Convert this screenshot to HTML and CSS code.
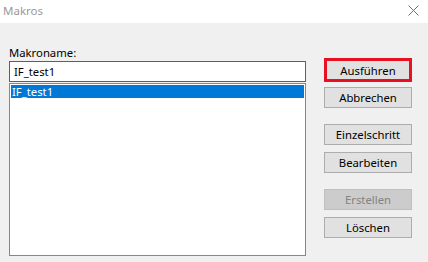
FILE: index.html
```
<!DOCTYPE html>
<html lang="de">
<head>
  <meta charset="UTF-8">
  <meta name="viewport" content="width=device-width, initial-scale=1.0">
  <title>Makros</title>
  <link rel="stylesheet" href="styles.css">
</head>
<body>
  <div class="titlebar">
    <span class="title">Makros</span>
    <svg class="close" width="11" height="11" viewBox="0 0 11 11">
      <path d="M0.5 0.5 L10.5 10.5 M10.5 0.5 L0.5 10.5" stroke="#707070" stroke-width="1" fill="none"/>
    </svg>
  </div>

  <div class="dialog">
    <div class="left">
      <div class="label">Makroname:</div>
      <div class="namefield">IF_test1</div>
      <div class="list">
        <div class="item selected">IF_test1</div>
      </div>
    </div>

    <div class="buttons">
      <button class="btn marked">Ausführen</button>
      <button class="btn">Abbrechen</button>
      <button class="btn group">Einzelschritt</button>
      <button class="btn">Bearbeiten</button>
      <button class="btn group" disabled>Erstellen</button>
      <button class="btn">Löschen</button>
    </div>
  </div>
</body>
</html>
```

FILE: styles.css
```
body {
  margin: 0;
  width: 428px;
  height: 262px;
  background: #f0f0f0;
  font-family: "Segoe UI", "Noto Sans", sans-serif;
  font-size: 11.3px;
  color: #000;
  overflow: hidden;
}
.titlebar {
  display: flex;
  align-items: center;
  justify-content: space-between;
  height: 23px;
  background: #fff;
  padding: 0 9px 0 3px;
}
.title {
  color: #999;
  font-size: 11.5px;
  line-height: 16px;
  margin-top: -2px;
}
.close {
  margin-top: -3px;
}
.dialog {
  display: flex;
  padding-left: 9px;
}
.left {
  display: flex;
  flex-direction: column;
  width: 297px;
  padding-top: 22px;
}
.label {
  line-height: 16px;
  height: 16px;
}
.namefield {
  height: 19px;
  line-height: 19px;
  border: 1px solid #0078d7;
  background: #fff;
  padding-left: 4px;
}
.list {
  margin-top: 1px;
  height: 170px;
  border: 1px solid #828790;
  background: #fff;
  padding: 1px 0 0 1px;
}
.item {
  height: 13px;
  line-height: 13px;
  padding-left: 1px;
  margin-right: 1px;
}
.item.selected {
  background: #0078d7;
  color: #fff;
}
.buttons {
  display: flex;
  flex-direction: column;
  margin-left: 18px;
  padding-top: 35px;
}
.btn {
  width: 88px;
  height: 21px;
  margin: 0 0 7px;
  padding: 0;
  font: inherit;
  color: #000;
  background: #e1e1e1;
  border: 1px solid #adadad;
}
.btn.marked {
  height: 24px;
  margin-bottom: 5px;
  border: 3px solid #e81123;
}
.btn.group {
  margin-top: 9px;
}
.btn:disabled {
  background: #cccccc;
  border-color: #bfbfbf;
  color: #838383;
}
```
